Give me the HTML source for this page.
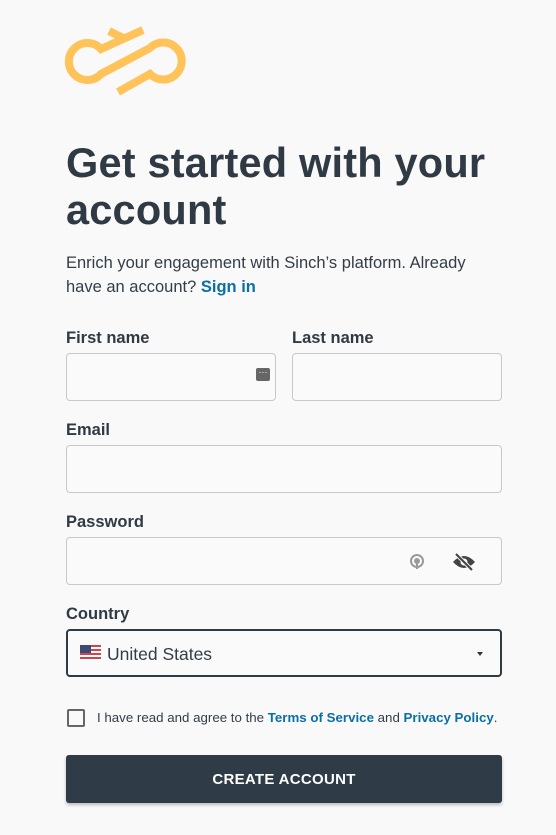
<!DOCTYPE html>
<html><head><meta charset="utf-8"><style>
*{box-sizing:border-box;margin:0;padding:0}
body{width:556px;height:835px;background:#f9f9f9;font-family:"Liberation Sans",sans-serif;color:#2f3a44;position:relative;overflow:hidden}
.a{position:absolute}
h1{position:absolute;left:66px;top:139px;font-size:41.5px;line-height:47px;font-weight:bold;letter-spacing:0.2px;color:#2f3a44}
.p{left:66px;top:251px;font-size:16.5px;line-height:24px;color:#333d47;width:425px}
.p b,.lk{color:#0a6fa5;font-weight:bold}
.lb{font-size:16.5px;font-weight:bold;color:#2f3a44}
.in{border:1px solid #c6c9cc;border-radius:4px;background:#fafafa;height:48px}
</style></head><body>
<svg class="a" style="left:0;top:0" width="200" height="100" viewBox="0 0 200 100">
<g fill="none" stroke="#ffc35a" stroke-width="8" stroke-linecap="butt">
<path d="M143,30 L101,49 A18.5,18.5 0 1 0 101,74 L150,48 A18.5,18.5 0 1 1 150,74 L118,92"/>
<path d="M109,31 L125,39"/>
</g></svg>
<h1>Get started with your<br>account</h1>
<div class="a p">Enrich your engagement with Sinch’s platform. Already have an account? <b>Sign in</b></div>
<div class="a lb" style="left:66px;top:329px">First name</div>
<div class="a lb" style="left:292px;top:329px">Last name</div>
<div class="a in" style="left:66px;top:353px;width:210px"></div>
<div class="a" style="left:256px;top:368px;width:14px;height:13px;background:#666;border-radius:2px;color:#fff;font-size:9px;line-height:9px;text-align:center">···</div>
<div class="a in" style="left:292px;top:353px;width:210px"></div>
<div class="a lb" style="left:66px;top:421px">Email</div>
<div class="a in" style="left:66px;top:445px;width:436px"></div>
<div class="a lb" style="left:66px;top:513px">Password</div>
<div class="a in" style="left:66px;top:537px;width:436px"></div>
<svg class="a" style="left:409px;top:553px" width="16" height="18" viewBox="0 0 16 18"><circle cx="8" cy="8" r="6" fill="none" stroke="#999" stroke-width="2"/><circle cx="8" cy="8" r="3" fill="#999"/><rect x="7" y="10" width="2" height="6" fill="#999"/></svg>
<svg class="a" style="left:452px;top:552px" width="24" height="20" viewBox="0 0 24 20"><path d="M1,10 Q12,-2 23,10 Q12,22 1,10Z" fill="#444"/><circle cx="12" cy="10" r="3.5" fill="#f9f9f9"/><path d="M4,2 L20,18" stroke="#f9f9f9" stroke-width="4"/><path d="M4,2 L20,18" stroke="#444" stroke-width="2"/></svg>
<div class="a lb" style="left:66px;top:605px">Country</div>
<div class="a" style="left:66px;top:629px;width:436px;height:48px;border:2px solid #2f3a44;border-radius:4px;background:#fafafa"></div>
<svg class="a" style="left:80px;top:645px" width="21" height="16" viewBox="0 0 21 16"><rect width="21" height="16" fill="#fff"/><g fill="#d2434b"><rect y="0" width="21" height="2"/><rect y="4" width="21" height="2"/><rect y="8" width="21" height="2"/><rect y="12" width="21" height="2"/></g><rect width="11" height="8" fill="#3c4a78"/></svg>
<div class="a" style="left:107px;top:644px;font-size:17.5px;color:#333d47">United States</div>
<div class="a" style="left:477px;top:652px;border-left:3.5px solid transparent;border-right:3.5px solid transparent;border-top:4px solid #333"></div>
<div class="a" style="left:67px;top:709px;width:18px;height:18px;border:2px solid #666;border-radius:2px"></div>
<div class="a" style="left:97px;top:710px;font-size:13.3px;color:#333d47">I have read and agree to the <span class="lk">Terms of Service</span> and <span class="lk">Privacy Policy</span>.</div>
<div class="a" style="left:66px;top:755px;width:436px;height:48px;background:#2f3b46;border-radius:3px;color:#fff;font-size:15px;font-weight:bold;text-align:center;line-height:50px;letter-spacing:0.3px;box-shadow:0 2px 3px rgba(0,0,0,.25)">CREATE ACCOUNT</div>
</body></html>
